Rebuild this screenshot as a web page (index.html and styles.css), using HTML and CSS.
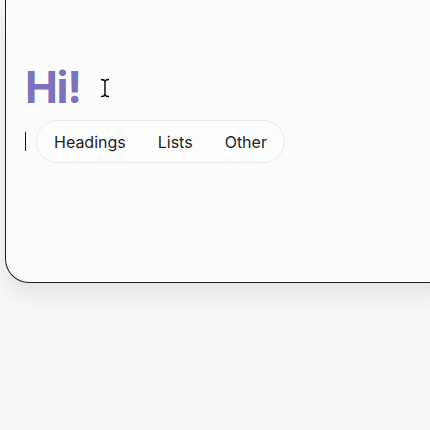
FILE: index.html
```html
<!DOCTYPE html>
<html lang="en">
<head>
  <meta charset="UTF-8">
  <title>Editor</title>
  <link rel="stylesheet" href="styles.css">
</head>
<body>
  <div class="card">
    <h1 class="title">Hi!</h1>
    <svg class="ibeam" width="10" height="20" viewBox="0 0 10 20">
      <path d="M1 1.5 Q5 1.5 5 4 Q5 1.5 9 1.5 M5 4 L5 16 M1 18.5 Q5 18.5 5 16 Q5 18.5 9 18.5" fill="none" stroke="#000" stroke-width="1.4"/>
    </svg>
    <div class="row">
      <span class="caret"></span>
      <div class="menu">
        <button>Headings</button>
        <button>Lists</button>
        <button>Other</button>
      </div>
    </div>
  </div>
</body>
</html>
```

FILE: styles.css
```css
* {box-sizing:border-box;margin:0;padding:0;}
body {background:#f7f7f7;font-family:'Inter',sans-serif;height:430px;overflow:hidden;}

.card {position:relative;margin-left:5px;width:440px;height:283px;background:#fcfcfc;border-left:1px solid #222;border-bottom:1px solid #222;border-bottom-left-radius:24px;padding:61px 0 0 19px;box-shadow:0 12px 24px rgba(0,0,0,0.08);}
.title {font-size:44px;line-height:53px;font-weight:700;color:#7b72c0;letter-spacing:-1.3px;}
.ibeam {position:absolute;left:94px;top:78px;}

.row {display:flex;align-items:center;margin-top:6px;}
.caret {width:1px;height:19px;background:#111;margin-right:10px;}
.menu {display:flex;align-items:center;height:43px;padding:0 1px;background:#fdfdfd;border:1px solid #ececec;border-radius:22px;}
.menu button {border:none;background:none;font-family:'Inter',sans-serif;font-size:16px;color:#222;padding:0 16px;height:100%;cursor:pointer;}
```
